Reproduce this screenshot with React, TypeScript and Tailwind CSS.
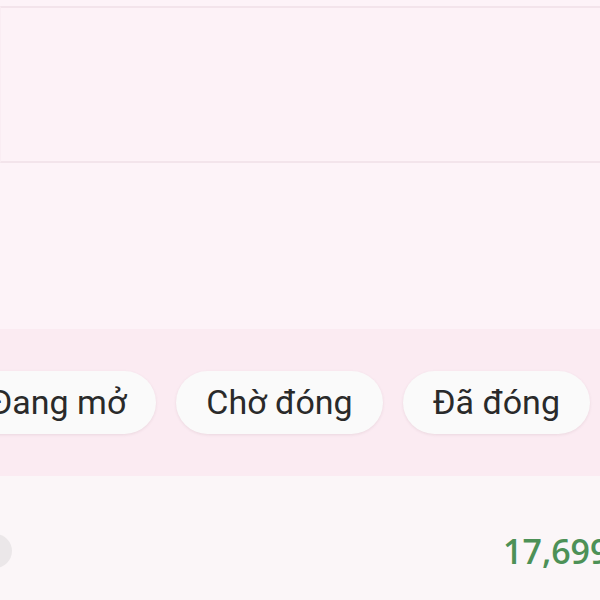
const chips = ['Đang mở', 'Chờ đóng', 'Đã đóng']

export default function App() {
  return (
    <div
      className="w-[600px] h-[600px] overflow-hidden bg-[#fdf3f8] flex flex-col"
      style={{ fontFamily: 'Roboto, "Noto Sans", sans-serif' }}
    >
      {/* top list rows */}
      <div className="h-[6px] shrink-0 bg-[#fdf3f8]" />
      <div className="h-[157px] shrink-0 border-t-2 border-b-2 border-[#f3e4eb] border-l border-l-[#faedf3] bg-[#fdf2f7]" />
      <div className="h-[166px] shrink-0 bg-[#fdf3f8]" />

      {/* status filter chips */}
      <div className="h-[147px] shrink-0 bg-[#fbebf2] flex items-center justify-end pr-[10px] gap-[20px] overflow-hidden">
        {chips.map((c) => (
          <div
            key={c}
            className="shrink-0 h-[63px] px-[30px] rounded-full bg-[#fafafa] shadow-[0_1px_3px_rgba(120,80,100,0.12)] flex items-center text-[34px] text-[#2a2a2a] whitespace-nowrap"
          >
            {c}
          </div>
        ))}
      </div>

      {/* summary row */}
      <div className="flex-1 bg-[#fbf6f8] flex items-center overflow-hidden pt-[26px]">
        <div className="shrink-0 w-[34px] h-[34px] -ml-[22px] rounded-full bg-[#ebe7e9]" />
        <span
          className="ml-[491px] whitespace-nowrap text-[34px] font-semibold text-[#4d9157] leading-none"
          style={{ fontFamily: '"Open Sans", "Noto Sans", sans-serif' }}
        >
          17,699
        </span>
      </div>
    </div>
  )
}
